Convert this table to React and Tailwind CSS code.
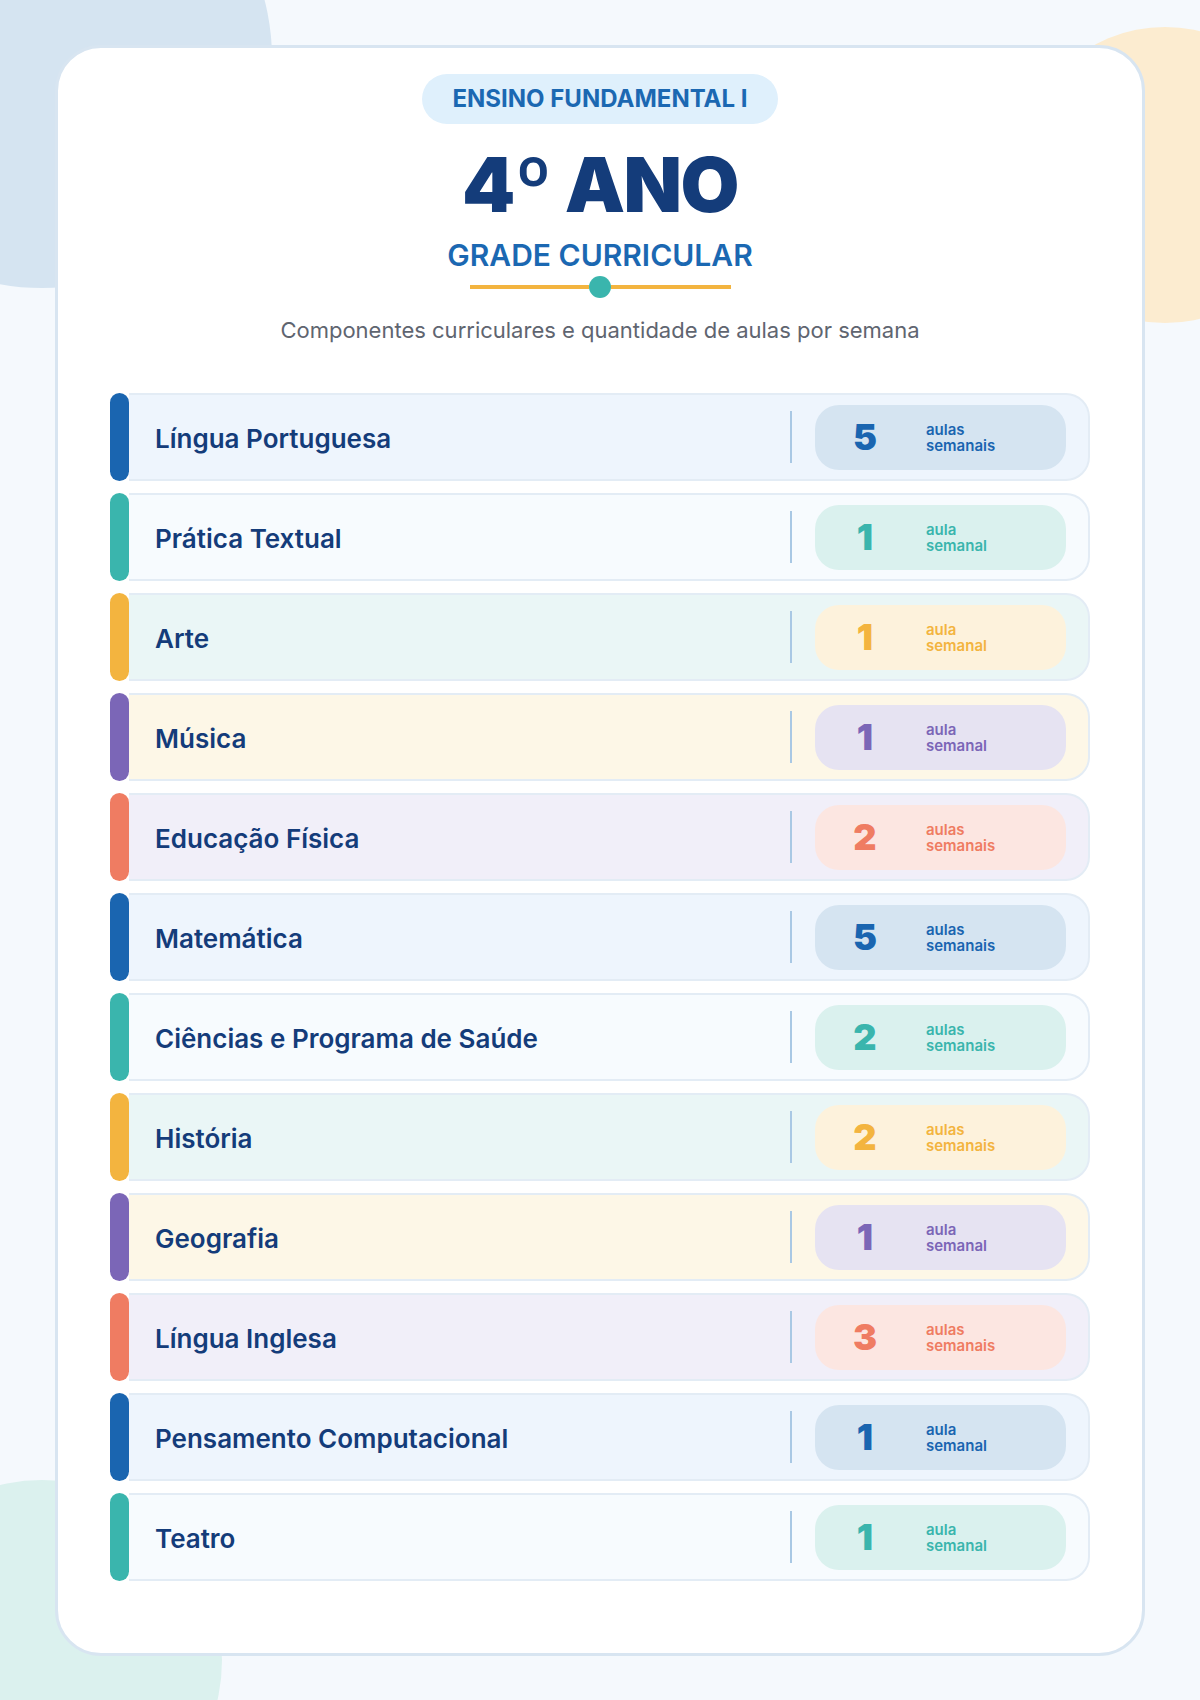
import React from 'react';

const themes = {
    blue: { bar: 'bg-[#1a65b0]', pill: 'bg-[#d5e4f1]', text: 'text-[#1a65b0]' },
    teal: { bar: 'bg-[#3ab5ad]', pill: 'bg-[#daf1ee]', text: 'text-[#3ab5ad]' },
    yellow: { bar: 'bg-[#f3b43f]', pill: 'bg-[#fdf2dc]', text: 'text-[#f3b43f]' },
    purple: { bar: 'bg-[#7b66b7]', pill: 'bg-[#e6e3f2]', text: 'text-[#7b66b7]' },
    coral: { bar: 'bg-[#ef7c62]', pill: 'bg-[#fce6e1]', text: 'text-[#ef7c62]' },
};

const rowBgs = ['bg-[#eef5fd]', 'bg-[#f7fbfe]', 'bg-[#eaf6f6]', 'bg-[#fdf7e7]', 'bg-[#f1eff9]'];

const subjects = [
    { name: 'Língua Portuguesa', aulas: 5, theme: 'blue' },
    { name: 'Prática Textual', aulas: 1, theme: 'teal' },
    { name: 'Arte', aulas: 1, theme: 'yellow' },
    { name: 'Música', aulas: 1, theme: 'purple' },
    { name: 'Educação Física', aulas: 2, theme: 'coral' },
    { name: 'Matemática', aulas: 5, theme: 'blue' },
    { name: 'Ciências e Programa de Saúde', aulas: 2, theme: 'teal' },
    { name: 'História', aulas: 2, theme: 'yellow' },
    { name: 'Geografia', aulas: 1, theme: 'purple' },
    { name: 'Língua Inglesa', aulas: 3, theme: 'coral' },
    { name: 'Pensamento Computacional', aulas: 1, theme: 'blue' },
    { name: 'Teatro', aulas: 1, theme: 'teal' },
];

const SubjectRow = ({ subject, index }) => {
    const t = themes[subject.theme];
    const plural = subject.aulas > 1;
    return (
        <div className="flex h-[88px]">
            <div className={`w-[19px] shrink-0 rounded-full ${t.bar}`} />
            <div className={`flex flex-1 items-center rounded-r-[24px] border-2 border-l-0 border-[#e3ecf5] pl-[26px] pr-[22px] ${rowBgs[index % 5]}`}>
                <span className="mt-[2px] flex-1 text-[26px] font-semibold text-[#143c7a]">{subject.name}</span>
                <div className="mr-[23px] h-[52px] w-[2px] bg-[#a9c8e4]" />
                <div className={`flex h-[65px] w-[251px] items-center rounded-[24px] ${t.pill} ${t.text}`}>
                    <span className="w-[100px] text-center text-[36px] font-black leading-none">{subject.aulas}</span>
                    <span className="ml-[11px] mt-[1px] flex flex-col text-[15px] font-semibold leading-[16px]">
                        <span>{plural ? 'aulas' : 'aula'}</span>
                        <span>{plural ? 'semanais' : 'semanal'}</span>
                    </span>
                </div>
            </div>
        </div>
    );
};

const App = () => {
    return (
        <div className="relative min-h-[1700px] overflow-hidden bg-[#f5f9fd] pt-[45px] font-['Inter','Noto_Sans',sans-serif]">
            {/* background blobs */}
            <div className="absolute -left-[188px] -top-[172px] h-[460px] w-[460px] rounded-full bg-[#d5e4f1]" />
            <div className="absolute left-[1017px] top-[27px] h-[296px] w-[296px] rounded-full bg-[#fcecd0]" />
            <div className="absolute -left-[138px] top-[1480px] h-[360px] w-[360px] rounded-full bg-[#dbf1ee]" />

            <div className="relative mx-auto w-[1090px] rounded-[46px] border-[3px] border-[#d8e5f1] bg-white px-[52px] pb-[72px] pt-[26px]">
                <div className="flex flex-col items-center">
                    <div className="h-[50px] rounded-full bg-[#dff0fc] px-[30px] text-[24px] font-bold leading-[50px] text-[#1b68b2]">
                        ENSINO FUNDAMENTAL I
                    </div>
                    <h1 className="mt-[22px] text-[76px] font-black leading-none tracking-[-0.02em] text-[#143c7a]">4º ANO</h1>
                    <h2 className="mt-[18px] text-[30px] font-semibold leading-none text-[#1b68b2]">GRADE CURRICULAR</h2>
                    <div className="mt-[6px] flex h-[22px] w-[261px] items-center">
                        <div className="h-[4px] flex-1 bg-[#f3b43f]" />
                        <div className="h-[22px] w-[22px] rounded-full bg-[#3ab5ad]" />
                        <div className="h-[4px] flex-1 bg-[#f3b43f]" />
                    </div>
                    <p className="mt-[21px] text-[22px] leading-none text-[#5f6570]">
                        Componentes curriculares e quantidade de aulas por semana
                    </p>
                </div>

                <div className="mt-[52px] flex flex-col gap-[12px]">
                    {subjects.map((s, i) => (
                        <SubjectRow key={s.name} subject={s} index={i} />
                    ))}
                </div>
            </div>
        </div>
    );
};

export default App;
